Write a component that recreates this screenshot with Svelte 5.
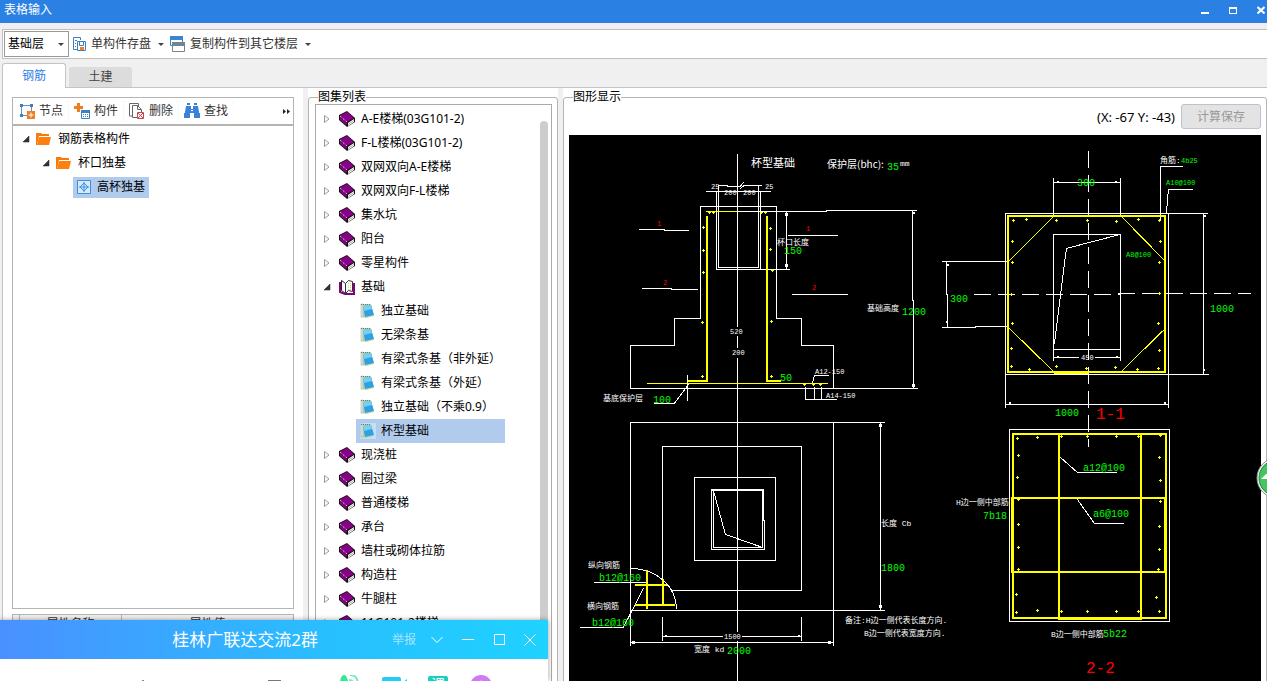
<script lang="ts">
	type Label = { x: number; y: number; text: string; kind: string };

	let floor = $state('基础层');
	let activeTab = $state('钢筋');
	let selected = $state('杯型基础');

	const tabs = ['钢筋', '土建'];

	const children = [
		'独立基础',
		'无梁条基',
		'有梁式条基（非外延）',
		'有梁式条基（外延）',
		'独立基础（不乘0.9）',
		'杯型基础'
	];

	const atlas = [
		{ name: 'A-E楼梯(03G101-2)' },
		{ name: 'F-L楼梯(03G101-2)' },
		{ name: '双网双向A-E楼梯' },
		{ name: '双网双向F-L楼梯' },
		{ name: '集水坑' },
		{ name: '阳台' },
		{ name: '零星构件' },
		{ name: '基础', items: children },
		{ name: '现浇桩' },
		{ name: '圈过梁' },
		{ name: '普通楼梯' },
		{ name: '承台' },
		{ name: '墙柱或砌体拉筋' },
		{ name: '构造柱' },
		{ name: '牛腿柱' },
		{ name: '11G101-2楼梯' }
	];

	// Rebar points of the elevation and of both sections
	const dots = [
		[703, 227], [703, 250], [703, 272], [702, 322], [702, 376],
		[770, 228], [770, 249], [772, 270], [771, 321], [771, 376],
		[1013, 220], [1026, 219], [1056, 220], [1087, 220], [1116, 221], [1138, 219], [1159, 220],
		[1012, 241], [1160, 241], [1012, 262], [1159, 262], [1011, 294], [1159, 293],
		[1012, 323], [1158, 323], [1011, 348], [1159, 350], [1011, 366], [1029, 369],
		[1056, 366], [1086, 368], [1115, 367], [1137, 369], [1158, 368],
		[1017, 438], [1037, 437], [1061, 436], [1087, 436], [1116, 436], [1138, 436], [1160, 435],
		[1018, 455], [1159, 457], [1017, 477], [1160, 480], [1018, 499], [1160, 501],
		[1018, 524], [1159, 526], [1018, 547], [1159, 549], [1018, 569], [1158, 569],
		[1016, 594], [1156, 597], [1016, 612], [1037, 610], [1061, 611], [1087, 611],
		[1116, 611], [1138, 611], [1159, 611]
	];

	// Rebar ends seen from the side
	const wedges = [[709, 212], [713, 212], [761, 212], [765, 212], [804, 384], [813, 384], [820, 384]];

	// Dimension line ends
	const ends = [[786, 214], [786, 265], [913, 385], [880, 425], [880, 606], [633, 642], [829, 642]];
	const smallEnds = [
		[913, 213], [665, 636], [798, 636], [1057, 182], [1115, 182], [1204, 216], [1203, 370],
		[947, 265], [946, 322], [1057, 357], [1116, 357], [1009, 403], [1164, 403]
	];

	const labels: Label[] = [
		{ x: 751, y: 167, text: '杯型基础', kind: 'title' },
		{ x: 827, y: 168, text: '保护层(bhc):', kind: 'cover' },
		{ x: 887, y: 170, text: '35', kind: 'value' },
		{ x: 900, y: 166, text: 'mm', kind: 'note' },
		{ x: 711, y: 189, text: '25', kind: 'small' },
		{ x: 765, y: 189, text: '25', kind: 'small' },
		{ x: 724, y: 195, text: '200', kind: 'small' },
		{ x: 743, y: 195, text: '200', kind: 'small' },
		{ x: 777, y: 245, text: '杯口长度', kind: 'note' },
		{ x: 784, y: 254, text: '150', kind: 'value' },
		{ x: 657, y: 226, text: '1', kind: 'mark' },
		{ x: 806, y: 231, text: '1', kind: 'mark' },
		{ x: 663, y: 285, text: '2', kind: 'mark' },
		{ x: 812, y: 290, text: '2', kind: 'mark' },
		{ x: 867, y: 311, text: '基础高度', kind: 'note' },
		{ x: 902, y: 315, text: '1200', kind: 'value' },
		{ x: 730, y: 334, text: '520', kind: 'small' },
		{ x: 732, y: 355, text: '200', kind: 'small' },
		{ x: 780, y: 381, text: '50', kind: 'value' },
		{ x: 815, y: 374, text: 'A12-150', kind: 'small' },
		{ x: 826, y: 398, text: 'A14-150', kind: 'small' },
		{ x: 603, y: 401, text: '基底保护层', kind: 'note' },
		{ x: 653, y: 403, text: '100', kind: 'value' },
		{ x: 881, y: 526, text: '长度 Cb', kind: 'note' },
		{ x: 881, y: 571, text: '1800', kind: 'value' },
		{ x: 588, y: 568, text: '纵向钢筋', kind: 'note' },
		{ x: 599, y: 581, text: 'b12@160', kind: 'value' },
		{ x: 587, y: 609, text: '横向钢筋', kind: 'note' },
		{ x: 592, y: 626, text: 'b12@160', kind: 'value' },
		{ x: 724, y: 639, text: '1500', kind: 'small' },
		{ x: 694, y: 652, text: '宽度 kd', kind: 'note' },
		{ x: 727, y: 654, text: '2000', kind: 'value' },
		{ x: 845, y: 623, text: '备注:H边一侧代表长度方向.', kind: 'note' },
		{ x: 864, y: 636, text: 'B边一侧代表宽度方向.', kind: 'note' },
		{ x: 1077, y: 186, text: '300', kind: 'value' },
		{ x: 1160, y: 163, text: '角筋:', kind: 'note' },
		{ x: 1181, y: 163, text: '4b25', kind: 'tag' },
		{ x: 1166, y: 185, text: 'A10@100', kind: 'tag' },
		{ x: 1126, y: 257, text: 'A8@100', kind: 'tag' },
		{ x: 950, y: 302, text: '300', kind: 'value' },
		{ x: 1210, y: 312, text: '1000', kind: 'value' },
		{ x: 1081, y: 360, text: '450', kind: 'small' },
		{ x: 1055, y: 416, text: '1000', kind: 'value' },
		{ x: 1096, y: 419, text: '1-1', kind: 'section' },
		{ x: 1083, y: 471, text: 'a12@100', kind: 'value' },
		{ x: 1093, y: 517, text: 'a6@100', kind: 'value' },
		{ x: 956, y: 505, text: 'H边一侧中部筋', kind: 'note' },
		{ x: 983, y: 519, text: '7b18', kind: 'value' },
		{ x: 1051, y: 637, text: 'B边一侧中部筋', kind: 'note' },
		{ x: 1103, y: 637, text: '5b22', kind: 'value' },
		{ x: 1086, y: 673, text: '2-2', kind: 'section' }
	];
</script>

{#snippet arrow(open: boolean)}
	<svg class="arrow" width="8" height="10" viewBox="0 0 8 10">
		{#if open}
			<path d="M7 2v6H1z" fill="#333" stroke="#222" stroke-width=".5" />
		{:else}
			<path d="M1.5 1.5v7L6 5z" fill="#fff" stroke="#999" />
		{/if}
	</svg>
{/snippet}

{#snippet folder()}
	<svg width="16" height="14" viewBox="0 0 16 14">
		<path d="M0 13V1h5l1 1h7v2H3L1 13z" fill="#f57c0a" />
		<path d="M3 5h12l-2 8H1z" fill="#ff7f0e" />
	</svg>
{/snippet}

<div class="window">
	<header class="titlebar">
		<span>表格输入</span>
		<div class="window-buttons">
			<button aria-label="最小化">
				<svg width="8" height="8"><path d="M0 6h8v2H0z" fill="#fff" /></svg>
			</button>
			<button aria-label="最大化">
				<svg width="8" height="8"><path d="M0 1h8v7H0zM1 3v4h6V3z" fill="#fff" fill-rule="evenodd" /></svg>
			</button>
			<button aria-label="关闭">
				<svg width="8" height="8"><path d="M.5 1l7 6.5M7.5 1l-7 6.5" stroke="#fff" stroke-width="2" /></svg>
			</button>
		</div>
	</header>

	<div class="toolbar">
		<div class="floor">
			<select aria-label="楼层" bind:value={floor}>
				<option>基础层</option>
				<option>首层</option>
			</select>
			<span class="caret"></span>
		</div>
		<button class="tool">
			<svg width="16" height="16" viewBox="0 0 16 16" fill="none">
				<path d="M7 13.5H2.500V1.500h7V4" stroke="#3b7fc4" />
				<path d="M4 4.500h2M4 7.500h1M4 10.500h1" stroke="#3b7fc4" />
				<path d="M6.500 5.500h8v9h-8z" fill="#fff" stroke="#3b7fc4" />
				<path d="M8.500 6v3.500h4V6" stroke="#3b7fc4" />
				<path d="M9 11h4v3H9z" fill="#ef7d22" />
			</svg>
			单构件存盘
			<span class="caret"></span>
		</button>
		<button class="tool">
			<svg width="16" height="16" viewBox="0 0 16 16">
				<path d="M.5.5h12v9H.5z" fill="#fff" stroke="#3b7fc4" />
				<path d="M0 0h13v4H0z" fill="#3d83cf" />
				<path d="M2.5 6.5h12v9h-12z" fill="#fff" stroke="#6f8592" />
				<path d="M2 6h13v4H2z" fill="#6f8592" />
			</svg>
			复制构件到其它楼层
			<span class="caret"></span>
		</button>
	</div>

	<div class="tabs">
		{#each tabs as tab}
			<button class="tab" class:active={tab === activeTab} onclick={() => (activeTab = tab)}>{tab}</button>
		{/each}
	</div>

	<main class="content">
		<section class="components">
			<div class="tree-tools">
				<button>
					<svg width="16" height="16" viewBox="0 0 16 16">
						<path d="M2.5 2.5h10v10h-10z" fill="#fff" stroke="#6a8fb5" />
						<path d="M1 1h3v3H1zM11 1h3v3h-3zM1 11h3v3H1z" fill="#3b7fc4" />
						<path d="M8 8h8v8H8z" fill="#ef7d22" />
						<path d="M9.5 12h5M12 9.5v5" stroke="#fff" />
					</svg>
					节点
				</button>
				<button>
					<svg width="16" height="16" viewBox="0 0 16 16">
						<path d="M3 0h3v3h3v3H6v3H3V6H0V3h3z" fill="#ef7d22" />
						<path d="M7.5 7.5h8v8h-8z" fill="#fff" stroke="#3b7fc4" />
						<path d="M7 7h9v3H7z" fill="#3b7fc4" />
						<path d="M9 11.5h5M9 13.5h5" stroke="#3b7fc4" stroke-dasharray="1 1" />
					</svg>
					构件
				</button>
				<button>
					<svg width="16" height="16" viewBox="0 0 16 16" fill="none">
						<path d="M3 13H.5V.5h9V3" stroke="#666" />
						<path d="M8 14.5H3.5v-12h5l4 4V9" fill="#fff" stroke="#666" />
						<path d="M8.5 2.5v4h4" stroke="#666" />
						<path d="M8.5 9.5h6v6h-6z" fill="#fff" stroke="#c8474c" />
						<path d="M9 10l5 5M14 10l-5 5" stroke="#c8474c" />
					</svg>
					删除
				</button>
				<button>
					<svg width="16" height="16" viewBox="0 0 16 16" fill="#3b82d8">
						<path d="M3 0h3v2H3zM10 0h3v2h-3zM2 3h5v3h2V3h5l1 6H9V7H7v2H1zM0 10h6v5H0zM10 10h6v5h-6z" />
						<path d="M1 8h14v2H1z" />
					</svg>
					查找
				</button>
				<button class="more" aria-label="更多">
					<svg width="8" height="7" viewBox="0 0 8 7"><path d="M0 1l3 2.5L0 6zM4 1l3 2.5L4 6z" fill="#222" /></svg>
				</button>
			</div>
			<ul class="tree">
				<li class="node">{@render arrow(true)}{@render folder()}钢筋表格构件</li>
				<li class="node second">{@render arrow(true)}{@render folder()}杯口独基</li>
				<li class="node leaf">
					<span class="chosen">
						<svg width="14" height="14" viewBox="0 0 14 14" fill="none" stroke="#3f8fdc">
							<path d="M.5.5h13v13H.5z" fill="#d3e9fc" />
							<path d="M7 2v10M2 7h10M7 3l4 4-4 4-4-4z" />
						</svg>
						高杯独基
					</span>
				</li>
			</ul>
			<div class="properties">
				<table>
					<thead>
						<tr><th class="corner"></th><th class="prop-name">属性名称</th><th>属性值</th></tr>
					</thead>
				</table>
			</div>
		</section>

		<div class="splitter"></div>

		<fieldset class="atlas">
			<legend>图集列表</legend>
			<div class="list">
				{#each atlas as group}
					<div class="row">
						{@render arrow(!!group.items)}
						{#if group.items}
							<svg width="16" height="16" viewBox="0 0 16 16">
								<path d="M1 3v10l5 2h9V4" fill="#fff" stroke="#800080" stroke-width="2" />
								<path d="M2.5 1.5l4 3v10l-4-3z" fill="#fff" stroke="#222" />
								<path d="M6.5 4.500l3-3 4 1v10l-4-1-3 3z" fill="#fff" stroke="#333" />
								<path d="M9.5 4v7M11.500 4v7" stroke="#ded36a" stroke-dasharray="1 1" />
							</svg>
						{:else}
							<svg width="16" height="16" viewBox="0 0 16 16">
								<path d="M0 4l8-4 8 7v4l-8 5-8-7z" fill="#111" />
								<path d="M1 4.500L8 1l7 6-7 4z" fill="#8b008b" />
								<path d="M1 5.500l6.500 5.500v3.500L1 9z" fill="#800080" />
								<path d="M9 12l6-4v3l-6 4z" fill="#fff" />
								<path d="M9 13.500l6-4" stroke="#777" stroke-width=".5" />
								<path d="M1 5l7 6" stroke="#fff" stroke-dasharray="1 1" />
							</svg>
						{/if}
						{group.name}
					</div>
					{#each group.items ?? [] as item}
						<button class="row child" class:selected={item === selected} onclick={() => (selected = item)}>
							<svg width="16" height="16" viewBox="0 0 16 16">
								<path d="M1 1h10l3 12-8 2-5-1z" fill="#c3d8a0" />
								<path d="M1 14V1h2v13z" fill="#dfe7d8" stroke="#8aa8b0" stroke-width=".5" />
								<path d="M3 3l8-1 3 10-9 2z" fill="#2fa0e4" />
								<path d="M3 3l8-1 1 4-8 2z" fill="#74d0f5" />
								<path d="M1 1.500h10" stroke="#7b7355" stroke-dasharray="1 1" />
							</svg>
							{item}
						</button>
					{/each}
				{/each}
				<div class="scrollbar"></div>
			</div>
		</fieldset>

		<div class="splitter"></div>

		<fieldset class="drawing">
			<legend>图形显示</legend>
			<div class="drawing-head">
				<span class="coords">(X: -67 Y: -43)</span>
				<button class="save" disabled>计算保存</button>
			</div>
			<div class="canvas">
				<svg width="692" height="546" viewBox="569 135 692 546">
					<g class="lines" transform="translate(0.4 0.4)">
						<!-- Elevation -->
						<path d="M737 154V327M737 336V348M737 358V632M737 641V681" />
						<path d="M718 185H727V186H740L743 182M739 189L742 186H743V185H762M706 191H771" />
						<path d="M716 191V269H790M760 191V269M718 185V267H758V185" />
						<path d="M700 206H776V318H801V345H833V388M700 206V318H674V345H630V388H918" />
						<path d="M737 211H826V210H917M786 211V269M912 210V300H913V388" />
						<path d="M639 229H664V230H689M788 235H838M642 288H671V289H698M792 294H848" />
						<path d="M829 375H814L812 383M805 387V399H837M814 387V399M821 387V399" />
						<path d="M654 403H674L689 383M687 375V401" />
						<!-- Plan -->
						<path d="M630 646V422H885M833 422V646M630 610H885M880 422V610" />
						<path d="M662 580V446H801V590H671M694 477H775V560H694Z" />
						<path d="M711 489H763V520H764V549H711ZM713 490H762V547H713ZM712 490H763" />
						<path d="M713 490L725 534L762 547" />
						<path d="M630 568C656 568 676 586 676 609" />
						<path d="M594 582H646M580 627H623L643 588" />
						<path d="M662 617V641M801 617V641M662 636H723M742 636H801M630 642H833" />
						<!-- Section 1-1 -->
						<path d="M1088 151V447M974 294H1120M1118 293H1251" stroke-dasharray="17 7" />
						<path d="M1053 178V217M1120 178V217M1053 182H1120" />
						<path d="M1005 408V213H1208M1168 213V408M1005 374H1209M1203 213V374M1005 404H1168" />
						<path d="M1053 361V234H1120V361M1053 349H1120M1053 357H1079M1095 357H1120" />
						<path d="M1120 234L1066 248L1054 344" />
						<path d="M942 261H1008M946 261V294H947V327M942 327H975V326H1008" />
						<path d="M1183 166H1160V221M1193 189H1168L1166 213" />
						<!-- Section 2-2 -->
						<path d="M1009 429H1169V621H1009Z" />
						<path d="M1060 457L1077 472H1117M1077 499L1094 523H1124" />
						<path
							class="stirrup"
							d="M706 211H737M647 383H828M1053 216L1008 261M1121 216L1165 261M1008 327L1053 371M1165 328L1121 371"
						/>
					</g>
					<g class="bars">
						<path d="M707 216V381H688M767 216V381H781" />
						<path d="M647 570V609M663 579V606M635 585H667M635 605H675" />
						<path d="M1008 216H1165V372H1008ZM1054 373H1088" />
						<path d="M1013 434H1166V618H1013ZM1059 434V619H1141V434M1012 498H1165V572H1012Z" />
					</g>
					<g fill="#ff0">
						{#each dots as [x, y]}
							<rect x={x - 1} {y} width="3" height="1" />
							<rect {x} y={y - 1} width="1" height="3" />
						{/each}
						{#each wedges as [x, y]}
							<rect x={x - 1} {y} width="3" height="1" />
							<rect {x} {y} width="1" height="2" />
						{/each}
					</g>
					<g fill="#fff">
						{#each ends as [x, y]}
							<rect x={x - 1} y={y - 1} width="3" height="3" />
						{/each}
						{#each smallEnds as [x, y]}
							<rect {x} y={y - 1} width="2" height="2" />
						{/each}
					</g>
					{#each labels as label}
						<text class={label.kind} x={label.x} y={label.y}>{label.text}</text>
					{/each}
				</svg>
			</div>
		</fieldset>
	</main>

	<button class="float-ball" aria-label="加速球">
		<svg width="42" height="42" viewBox="0 0 42 42">
			<circle cx="21" cy="21" r="20" fill="#fff" stroke="#8b8b8b" />
			<circle cx="21" cy="21" r="18" fill="#45c463" stroke="#16823c" />
			<path d="M5 22l5-5h5v3h8v4h-8v-2z" fill="#fff" />
		</svg>
	</button>

	<div class="chat">
		<div class="chat-head">
			<span class="chat-title">桂林广联达交流2群</span>
			<a href="#report">举报</a>
			<div class="chat-buttons">
				<button aria-label="展开"><svg width="12" height="12"><path d="M.5 3L6 8.5 11.5 3" /></svg></button>
				<button aria-label="最小化"><svg width="12" height="12"><path d="M0 5.5h12" /></svg></button>
				<button aria-label="最大化"><svg width="12" height="12"><path d="M1.5.5h10v10h-10z" /></svg></button>
				<button aria-label="关闭"><svg width="12" height="12"><path d="M.5.5l11 11M11.5.5l-11 11" /></svg></button>
			</div>
		</div>
		<div class="chat-tools">
			<svg class="handle" width="146" height="24" viewBox="0 0 146 24">
				<path d="M7 5h2v19H7z" fill="#888" />
				<path d="M134 6h11v16h-11z" fill="none" stroke="#777" stroke-width="2" />
			</svg>
			<svg width="24" height="24" viewBox="0 0 24 24">
				<path d="M3 3c1-4 5-4 6 0l2 5-4 3c1 4 4 6 6 7l4-2 4 5-4 3C8 23-1 12 3 3z" fill="#2eea95" />
				<path d="M11 5c4 0 5 3 5 6M12 0c6 0 8 5 8 10" fill="none" stroke="#7eeab8" stroke-width="2" />
			</svg>
			<svg width="26" height="24" viewBox="0 0 26 24">
				<rect y="2" width="19" height="18" rx="2" fill="#1fcdf8" />
				<path d="M20 8l5-4v14l-5-4z" fill="#1fcdf8" />
			</svg>
			<span class="lesson">课</span>
			<svg width="24" height="24" viewBox="0 0 24 24">
				<circle cx="13" cy="11" r="11" fill="#cf7bf7" />
				<path d="M13 5l2 4 4 1-3 3 1 5-4-2-4 2 1-5-3-3 4-1z" fill="#fff" />
			</svg>
		</div>
	</div>
</div>

<style>
	:global(body) {
		margin: 0;
		overflow: hidden;
	}

	.window {
		position: relative;
		display: flex;
		flex-direction: column;
		height: 100vh;
		overflow: hidden;
		background: #f0f0f0;
		color: #000;
		font: 12px/16px 'Noto Sans', 'Noto Sans CJK SC', sans-serif;
	}

	button {
		display: flex;
		align-items: center;
		padding: 0;
		border: none;
		background: none;
		color: inherit;
		font: inherit;
		white-space: nowrap;
	}

	svg {
		display: block;
		flex: none;
	}

	/* Title bar */
	.titlebar {
		display: flex;
		flex: none;
		justify-content: space-between;
		align-items: center;
		height: 23px;
		padding: 0 2px 4px 4px;
		box-sizing: border-box;
		background: #2b80e3;
		color: #fff;
	}

	.window-buttons {
		display: flex;
		gap: 20px;
	}

	/* Toolbar */
	.toolbar {
		display: flex;
		flex: none;
		align-items: center;
		height: 28px;
		margin: 6px 0 0 2px;
		padding-left: 1px;
		border: 1px solid #bfbfbf;
		border-right: none;
		background: #fff;
		color: #333;
	}

	.floor {
		position: relative;
		margin-right: 2px;
	}

	.floor select {
		display: block;
		width: 65px;
		height: 26px;
		padding: 0 3px;
		border: 1px solid #999;
		border-radius: 0;
		appearance: none;
		background: #fff;
		color: #000;
		font: inherit;
	}

	.caret {
		border: 3px solid transparent;
		border-top-color: #444;
		border-bottom: none;
	}

	.floor .caret {
		position: absolute;
		top: 12px;
		right: 5px;
		pointer-events: none;
	}

	.tool {
		gap: 4px;
		margin-right: 6px;
	}

	.tool .caret {
		margin-left: 3px;
	}

	/* Tabs */
	.tabs {
		display: flex;
		flex: none;
		align-items: flex-end;
		gap: 3px;
		height: 28px;
		padding-left: 2px;
	}

	.tab {
		justify-content: center;
		width: 63px;
		height: 20px;
		border-radius: 3px 3px 0 0;
		background: #dcdcdc;
		color: #444;
	}

	.tab.active {
		z-index: 1;
		width: 64px;
		height: 25px;
		margin-bottom: -1px;
		border: 1px solid #c3c3cb;
		border-bottom: none;
		background: #fff;
		color: #2b80e3;
	}

	/* Content */
	.content {
		display: grid;
		flex: 1;
		grid-template-columns: 300px 5px 250px 5px 1fr;
		min-height: 0;
		margin-left: 2px;
		border-top: 1px solid #c3c3cb;
		border-left: 1px solid #c3c3cb;
		background: #fff;
	}

	.splitter {
		background: #f0f0f0;
	}

	.components {
		display: flex;
		flex-direction: column;
		min-height: 0;
		padding: 9px 9px 0;
	}

	.tree-tools {
		display: flex;
		gap: 1px;
		padding: 3px 1px;
		border: 1px solid #b4b4b4;
		color: #333;
	}

	.tree-tools button {
		gap: 4px;
		height: 20px;
		padding: 0 5px;
		border-radius: 2px;
		box-shadow: 0 0 1px #ddd;
	}

	.tree-tools .more {
		margin-left: auto;
		padding: 0 1px;
		box-shadow: none;
	}

	.tree {
		flex: 1;
		margin: 0;
		padding: 1px 0 0 9px;
		border: 1px solid #b4b4b4;
		list-style: none;
	}

	.node {
		display: flex;
		align-items: center;
		gap: 6px;
		height: 24px;
	}

	.second {
		padding-left: 20px;
	}

	.leaf {
		padding-left: 51px;
	}

	.chosen {
		display: flex;
		align-items: center;
		gap: 6px;
		height: 21px;
		padding: 0 4px;
		background: #b1cbec;
	}

	.properties {
		flex: none;
		height: 67px;
		margin-top: 5px;
		overflow: hidden;
		background: #f0f0f0;
	}

	.properties table {
		width: 100%;
		border-collapse: collapse;
		table-layout: fixed;
	}

	.properties th {
		height: 18px;
		padding: 0;
		border: 1px solid #b4b4b4;
		font-weight: normal;
		color: #333;
	}

	.properties .corner {
		width: 6px;
	}

	.properties .prop-name {
		width: 101px;
	}

	/* Group boxes, running on below the window edge */
	fieldset {
		display: flex;
		flex-direction: column;
		min-width: 0;
		min-height: 0;
		margin: 2px 0 -4px;
		padding: 0 5px;
		border: 1px solid #b4b4b4;
		border-radius: 3px;
	}

	legend {
		height: 14px;
		margin-left: 4px;
		padding: 0;
		line-height: 14px;
	}

	.atlas {
		padding-left: 6px;
	}

	.atlas legend {
		margin-left: 3px;
	}

	.list {
		position: relative;
		flex: 1;
		min-height: 0;
		padding-top: 2px;
		border: 1px solid #aaa;
		overflow: hidden;
	}

	.row {
		display: flex;
		align-items: center;
		height: 24px;
		padding-left: 7px;
		white-space: nowrap;
	}

	.row svg {
		margin-right: 6px;
	}

	.row .arrow {
		margin-right: 8px;
	}

	.child {
		width: 149px;
		margin-left: 40px;
		padding-left: 4px;
	}

	.child svg {
		margin-right: 5px;
	}

	.child.selected {
		background: #b1cbec;
	}

	.child.selected svg {
		background: #c4dffa;
	}

	.scrollbar {
		position: absolute;
		top: 16px;
		right: 3px;
		bottom: 0;
		width: 8px;
		border-radius: 4px;
		background: #cdcdcd;
	}

	.drawing-head {
		display: flex;
		flex: none;
		justify-content: flex-end;
		gap: 6px;
		height: 31px;
	}

	.coords {
		font-size: 13px;
		line-height: 26px;
	}

	.save {
		justify-content: center;
		width: 80px;
		height: 25px;
		border: 1px solid #bcc3d0;
		border-radius: 3px;
		background: #e3e3e3;
		color: #999;
	}

	.canvas {
		flex: 1;
		min-height: 0;
		overflow: hidden;
		background: #000;
	}

	/* Drawing */
	.lines,
	.bars {
		fill: none;
		stroke: #fff;
		shape-rendering: crispEdges;
	}

	.stirrup {
		stroke: #ff0;
	}

	.bars {
		stroke: #ff0;
		stroke-width: 2;
	}

	text {
		fill: #fff;
		font-family: 'Liberation Mono', 'Noto Sans CJK SC', monospace;
		font-size: 8px;
		white-space: pre;
	}

	.title {
		font-size: 11px;
	}

	.cover {
		font-family: 'Noto Sans CJK SC', sans-serif;
		font-size: 10px;
	}

	.value {
		fill: #0f0;
		font-size: 10px;
	}

	.small {
		font-size: 7px;
	}

	.tag {
		fill: #0f0;
		font-size: 7px;
	}

	.mark {
		fill: #f00;
		font-size: 7px;
	}

	.section {
		fill: #f00;
		font-size: 16px;
	}

	/* Floating ball on the window edge */
	.float-ball {
		position: absolute;
		top: 457px;
		right: -31px;
	}

	/* Chat window over the lower left corner */
	.chat {
		position: absolute;
		bottom: 0;
		left: 0;
		width: 548px;
		background: #fff;
		box-shadow: 0 0 5px rgba(0, 0, 0, 0.4);
	}

	.chat-head {
		display: flex;
		align-items: center;
		justify-content: flex-end;
		height: 39px;
		padding-right: 12px;
		background: linear-gradient(90deg, #4a90ff, #28bfff 60%, #1fd2ff);
		color: #fff;
	}

	.chat-title {
		margin-right: 74px;
		font-size: 17px;
	}

	.chat-head a {
		margin-right: 15px;
		color: #a5e4ff;
		text-decoration: none;
	}

	.chat-buttons {
		display: flex;
		gap: 19px;
	}

	.chat-buttons path {
		fill: none;
		stroke: #fff;
	}

	.chat-tools {
		display: flex;
		justify-content: flex-end;
		gap: 20px;
		height: 6px;
		padding: 16px 56px 0 0;
		overflow: hidden;
	}

	.handle {
		margin-right: 37px;
	}

	.lesson {
		width: 20px;
		height: 20px;
		margin-top: 1px;
		border-radius: 2px;
		background: #18cfc0;
		color: #fff;
		font-size: 14px;
		line-height: 16px;
		text-align: center;
	}
</style>
